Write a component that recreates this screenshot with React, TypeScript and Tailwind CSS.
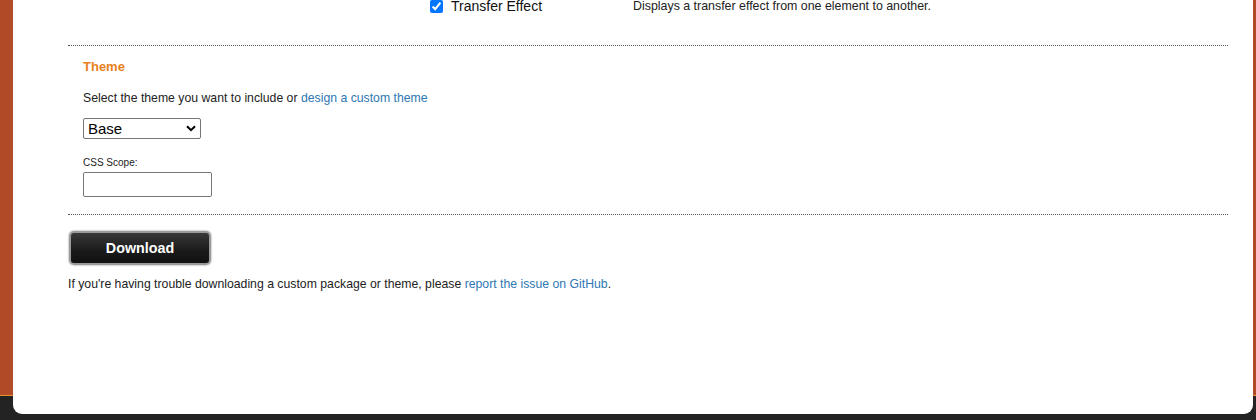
import React from "react";

export default function App() {
  const font = { fontFamily: '"Liberation Sans", Arial, sans-serif' };
  return (
    <div
      className="w-[1256px] h-[420px] overflow-hidden pl-[13px] pr-[3px] bg-[linear-gradient(to_bottom,#b04a27_0px,#b04a27_395px,#e4922e_395px,#e4922e_396px,#232323_396px)]"
      style={font}
    >
      <div className="h-[414px] bg-white rounded-b-[9px] pl-[55px] pr-[25px] text-[#222] overflow-hidden">
        {/* top effect row */}
        <div className="-mt-[1px] h-[15px] flex items-center">
          <input
            type="checkbox"
            defaultChecked
            className="ml-[362px] w-[13px] h-[13px] m-0 accent-[#0075ff]"
          />
          <span className="ml-[8px] w-[182px] text-[14px] leading-[15px] text-[#111]">Transfer Effect</span>
          <span className="text-[12.4px] leading-[15px] text-[#222]">
            Displays a transfer effect from one element to another.
          </span>
        </div>

        <div className="mt-[31px] border-t border-dotted border-[#555]" />

        <div className="pl-[15px]">
          <div className="mt-[13px] text-[13px] leading-[16px] font-bold text-[#e8811c]">Theme</div>
          <div className="mt-[15px] text-[12.25px] leading-[16px]">
            Select the theme you want to include or{" "}
            <span className="text-[#2d78b4]">design a custom theme</span>
          </div>
          <div className="mt-[12px] w-[118px] h-[21px] border border-[#767676] rounded-[2px] flex items-center justify-between pl-[4px] pr-[4px] bg-white">
            <span className="text-[15px] leading-[18px] text-black">Base</span>
            <svg width="10" height="7" viewBox="0 0 10 7">
              <path d="M1 1.2 L5 5.2 L9 1.2" fill="none" stroke="#000" strokeWidth="2" />
            </svg>
          </div>
          <div className="mt-[18px] text-[10px] leading-[12px]">CSS Scope:</div>
          <div className="mt-[3px] w-[129px] h-[25px] border border-[#767676] rounded-[2px] bg-white" />
        </div>

        <div className="mt-[17px] border-t border-dotted border-[#555]" />

        <div className="mt-[16px] ml-[1px] w-[142px] h-[34px] rounded-[5px] border-2 border-[#9a9a9a] bg-[linear-gradient(to_bottom,#383838,#1a1a1a_60%,#111)] shadow-[0_0_2px_#777] flex items-center justify-center">
          <span className="text-white font-bold text-[14.3px] leading-[18px]">Download</span>
        </div>

        <div className="mt-[11px] text-[12.25px] leading-[16px]">
          If you're having trouble downloading a custom package or theme, please{" "}
          <span className="text-[#2d78b4]">report the issue on GitHub</span>.
        </div>
      </div>
    </div>
  );
}
